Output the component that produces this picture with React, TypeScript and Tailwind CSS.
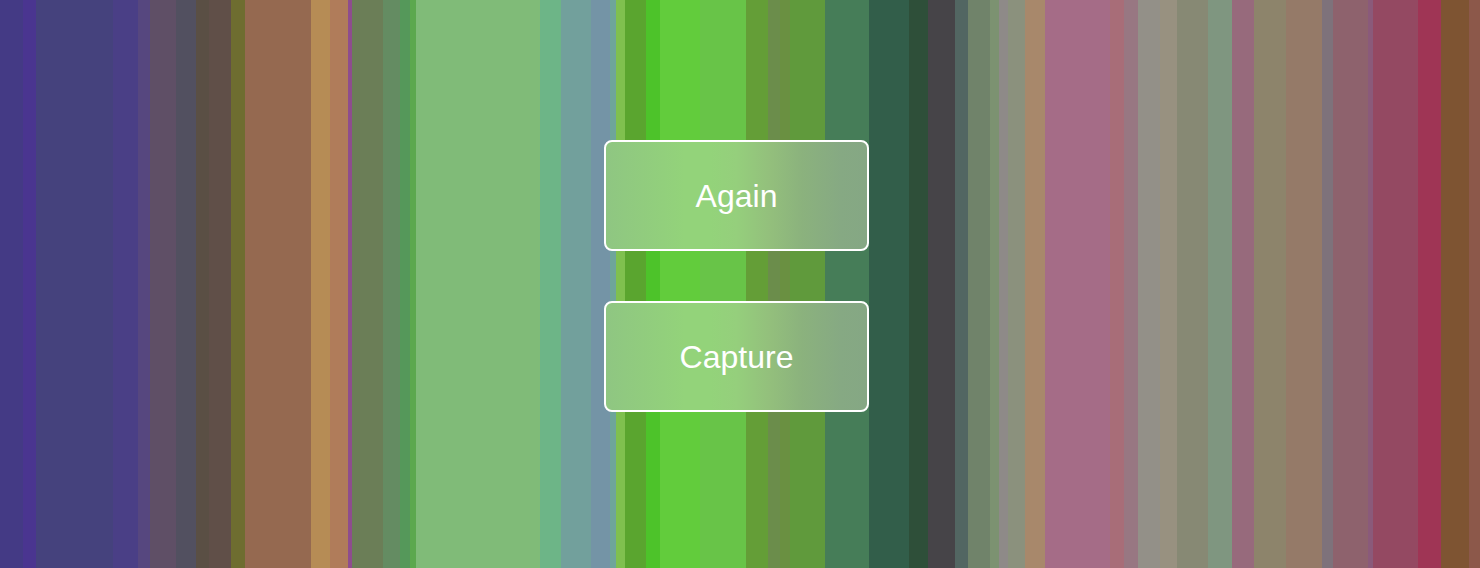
import React from "react";

const stripes = [
  "w-[23px] bg-[#443a85]",
  "w-[13px] bg-[#4a3590]",
  "w-[77px] bg-[#45427d]",
  "w-[25px] bg-[#4a3f86]",
  "w-[12px] bg-[#56477f]",
  "w-[26px] bg-[#5f4f66]",
  "w-[20px] bg-[#525060]",
  "w-[13px] bg-[#5a4f44]",
  "w-[22px] bg-[#604f48]",
  "w-[14px] bg-[#6e6d30]",
  "w-[66px] bg-[#956950]",
  "w-[19px] bg-[#b68c55]",
  "w-[18px] bg-[#b07c5a]",
  "w-[4px] bg-[#8e4d8e]",
  "w-[31px] bg-[#6b7e57]",
  "w-[17px] bg-[#648c62]",
  "w-[10px] bg-[#55985a]",
  "w-[6px] bg-[#5ca84e]",
  "w-[124px] bg-[#80bb78]",
  "w-[21px] bg-[#6db587]",
  "w-[30px] bg-[#72a09c]",
  "w-[19px] bg-[#7494a6]",
  "w-[6px] bg-[#6ea59a]",
  "w-[9px] bg-[#7fc04f]",
  "w-[21px] bg-[#5aa52f]",
  "w-[14px] bg-[#4dc32a]",
  "w-[40px] bg-[#62cc3c]",
  "w-[46px] bg-[#68c448]",
  "w-[22px] bg-[#649e37]",
  "w-[12px] bg-[#6b8d4b]",
  "w-[10px] bg-[#6a9041]",
  "w-[35px] bg-[#609a3c]",
  "w-[44px] bg-[#467d58]",
  "w-[40px] bg-[#325e4a]",
  "w-[19px] bg-[#2e4f39]",
  "w-[27px] bg-[#464448]",
  "w-[13px] bg-[#526662]",
  "w-[22px] bg-[#70836a]",
  "w-[9px] bg-[#7c9271]",
  "w-[9px] bg-[#8e8a88]",
  "w-[17px] bg-[#8b917d]",
  "w-[20px] bg-[#a8886b]",
  "w-[65px] bg-[#a56c87]",
  "w-[14px] bg-[#a86d78]",
  "w-[14px] bg-[#987782]",
  "w-[22px] bg-[#939088]",
  "w-[17px] bg-[#989180]",
  "w-[31px] bg-[#878974]",
  "w-[24px] bg-[#7f9680]",
  "w-[22px] bg-[#976a7c]",
  "w-[32px] bg-[#8d846b]",
  "w-[36px] bg-[#957a68]",
  "w-[11px] bg-[#7e727b]",
  "w-[35px] bg-[#8e626d]",
  "w-[5px] bg-[#8a5a7a]",
  "w-[45px] bg-[#944962]",
  "w-[23px] bg-[#9f3555]",
  "w-[28px] bg-[#7e5432]",
  "w-[11px] bg-[#8c584a]",
];

// frosted look of the buttons, sampled from the blurred stripes behind them
const GlassButton = ({ label }: { label: string }) => (
  <button className="w-[265px] h-[111px] rounded-lg border-2 border-white bg-[linear-gradient(to_right,#8fc682_0%,#91cc7e_14%,#93d37a_30%,#93d37a_40%,#95cf7c_50%,#93bf7c_63%,#8bb27d_75%,#86a983_90%,#85a784_100%)] text-white text-[32px] font-['Liberation_Sans',Arial,sans-serif]">
    {label}
  </button>
);

const App = () => {
  return (
    <div className="relative w-[1480px] h-[568px] overflow-hidden">
      {/* background stripes */}
      <div className="flex h-full">
        {stripes.map((s, i) => (
          <div key={i} className={"shrink-0 h-full " + s}></div>
        ))}
      </div>

      <div className="absolute inset-0 flex flex-col items-center justify-center gap-[50px] pr-[7px] pb-[16px]">
        <GlassButton label="Again" />
        <GlassButton label="Capture" />
      </div>
    </div>
  );
};

export default App;
